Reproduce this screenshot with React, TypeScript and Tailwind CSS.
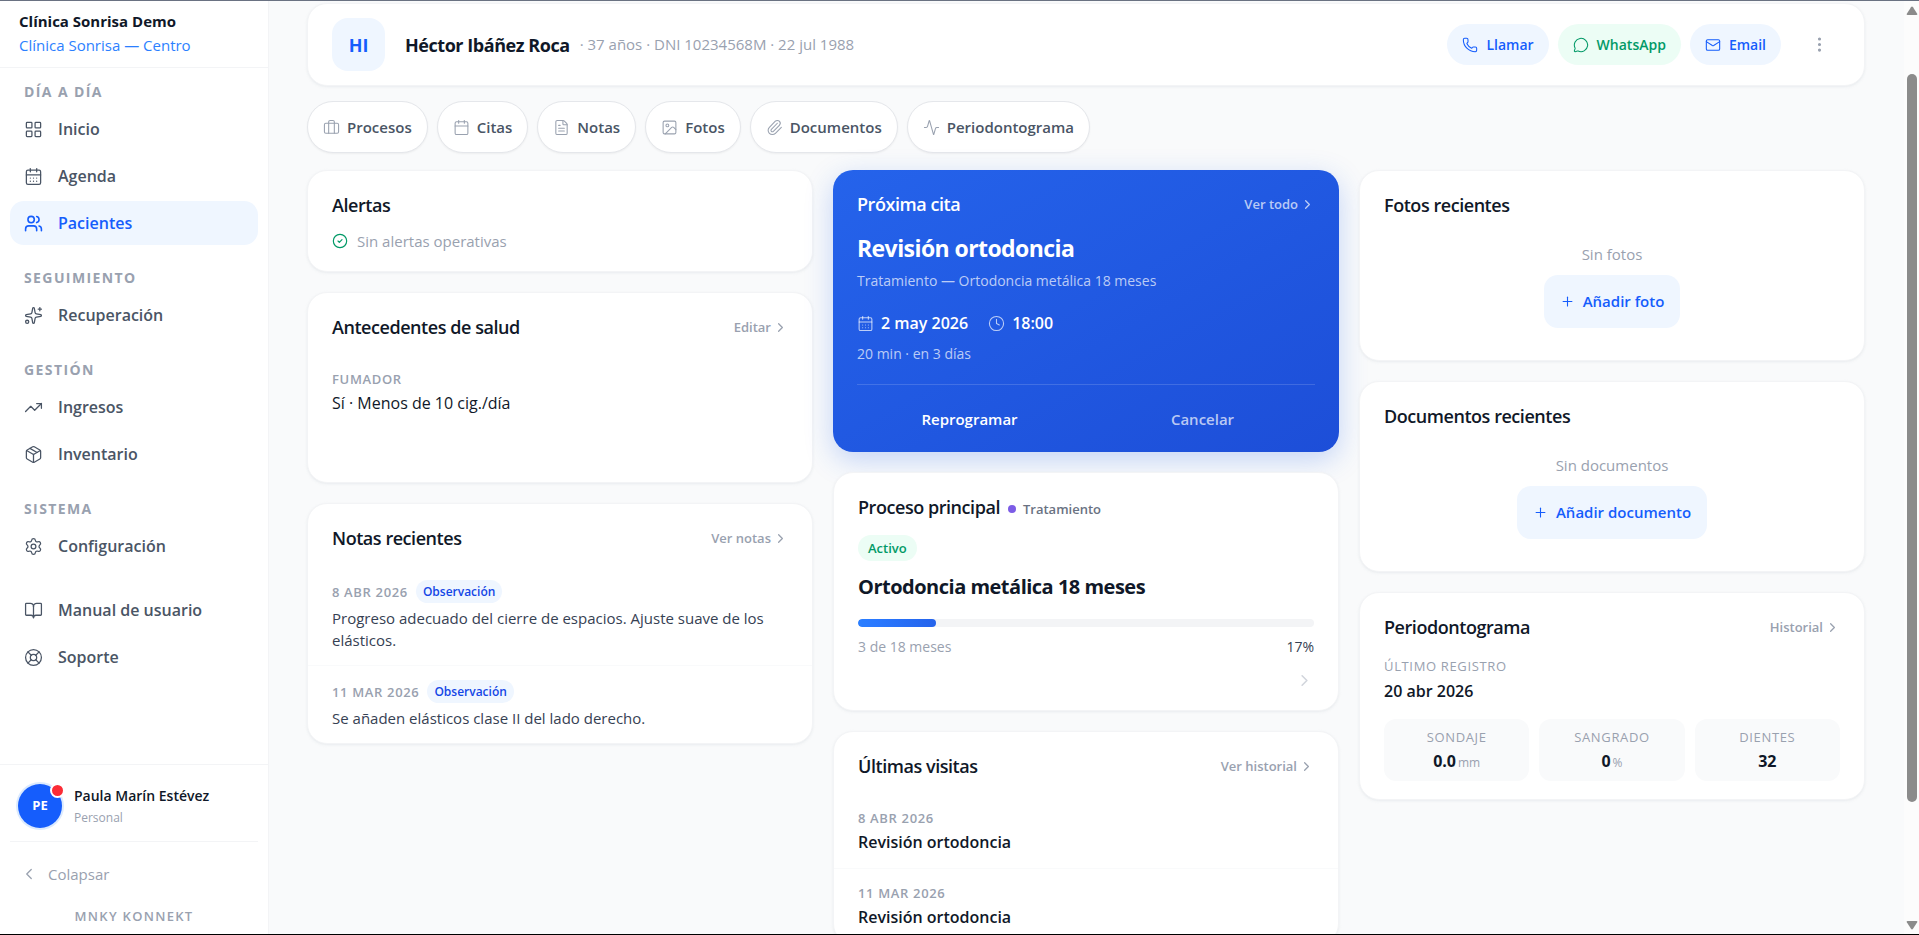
import clsx from 'clsx';
import {
  Activity,
  BookOpen,
  Briefcase,
  Calendar,
  CalendarDays,
  ChevronLeft,
  ChevronRight,
  CircleCheck,
  Clock,
  EllipsisVertical,
  FileText,
  Image,
  LayoutGrid,
  LifeBuoy,
  Mail,
  MessageCircle,
  Package,
  Paperclip,
  Phone,
  Plus,
  Settings,
  Sparkles,
  TrendingUp,
  Users,
  type LucideIcon,
} from 'lucide-react';
import type { ReactNode } from 'react';

interface NavItem {
  label: string;
  icon: LucideIcon;
  active?: boolean;
}

const NAV_GROUPS: { title: string; items: NavItem[] }[] = [
  {
    title: 'Día a día',
    items: [
      { label: 'Inicio', icon: LayoutGrid },
      { label: 'Agenda', icon: CalendarDays },
      { label: 'Pacientes', icon: Users, active: true },
    ],
  },
  { title: 'Seguimiento', items: [{ label: 'Recuperación', icon: Sparkles }] },
  {
    title: 'Gestión',
    items: [
      { label: 'Ingresos', icon: TrendingUp },
      { label: 'Inventario', icon: Package },
    ],
  },
  { title: 'Sistema', items: [{ label: 'Configuración', icon: Settings }] },
];

const HELP_ITEMS: NavItem[] = [
  { label: 'Manual de usuario', icon: BookOpen },
  { label: 'Soporte', icon: LifeBuoy },
];

const SECTIONS: NavItem[] = [
  { label: 'Procesos', icon: Briefcase },
  { label: 'Citas', icon: Calendar },
  { label: 'Notas', icon: FileText },
  { label: 'Fotos', icon: Image },
  { label: 'Documentos', icon: Paperclip },
  { label: 'Periodontograma', icon: Activity },
];

const NOTES = [
  {
    date: '8 abr 2026',
    kind: 'Observación',
    text: 'Progreso adecuado del cierre de espacios. Ajuste suave de los elásticos.',
  },
  {
    date: '11 mar 2026',
    kind: 'Observación',
    text: 'Se añaden elásticos clase II del lado derecho.',
  },
];

const VISITS = [
  { date: '8 abr 2026', title: 'Revisión ortodoncia' },
  { date: '11 mar 2026', title: 'Revisión ortodoncia' },
];

const PERIO_STATS = [
  { label: 'Sondaje', value: '0.0', unit: 'mm' },
  { label: 'Sangrado', value: '0', unit: '%' },
  { label: 'Dientes', value: '32', unit: '' },
];

const PROGRESS = 17;

const NavLink = ({ label, icon: Icon, active }: NavItem) => (
  <a
    href="#"
    className={clsx(
      'flex h-11 items-center gap-[15px] rounded-[14px] px-[14px] text-base font-semibold',
      active ? 'bg-blue-50 text-blue-600' : 'text-gray-600',
    )}
  >
    <Icon size={19} strokeWidth={active ? 2 : 1.6} />
    {label}
  </a>
);

const Sidebar = () => (
  <aside className="flex w-[269px] shrink-0 flex-col border-r border-gray-100 bg-white">
    <div className="border-b border-gray-100 px-[19px] pt-2 pb-[10px] text-[15px] leading-6">
      <p className="font-bold text-gray-900">Clínica Sonrisa Demo</p>
      <p className="text-blue-500">Clínica Sonrisa — Centro</p>
    </div>

    <nav className="flex flex-1 flex-col px-[10px] pt-[14px]">
      <div className="flex flex-col gap-[23px]">
        {NAV_GROUPS.map((group) => (
          <div key={group.title}>
            <h2 className="mb-[5px] px-[14px] text-sm leading-5 font-bold tracking-widest text-gray-400 uppercase">
              {group.title}
            </h2>
            <div className="flex flex-col gap-[3px]">
              {group.items.map((item) => (
                <NavLink key={item.label} {...item} />
              ))}
            </div>
          </div>
        ))}
      </div>
      <div className="mt-5 flex flex-col gap-[3px]">
        {HELP_ITEMS.map((item) => (
          <NavLink key={item.label} {...item} />
        ))}
      </div>
    </nav>

    <div className="border-t border-gray-100 px-[10px]">
      <div className="flex items-center gap-3 border-b border-gray-100 px-2 pt-[19px] pb-[13px]">
        <div className="relative flex size-[44px] items-center justify-center rounded-full bg-blue-600 text-[13px] font-bold text-white ring-2 ring-blue-100">
          PE
          <span className="absolute -top-[1px] -right-[3px] size-[15px] rounded-full border-2 border-white bg-red-500" />
        </div>
        <div>
          <p className="text-sm leading-6 font-semibold text-gray-900">Paula Marín Estévez</p>
          <p className="text-xs leading-5 text-gray-400">Personal</p>
        </div>
      </div>
      <button type="button" className="mt-[10px] flex h-11 items-center gap-[10px] px-[10px] text-[15px] text-gray-400">
        <ChevronLeft size={18} strokeWidth={1.75} />
        Colapsar
      </button>
      <p className="pt-[10px] pb-2 text-center text-[13px] leading-5 font-semibold tracking-widest text-gray-400">
        MNKY KONNEKT
      </p>
    </div>
  </aside>
);

const Card = ({ children, className }: { children: ReactNode; className?: string }) => (
  <section className={clsx('rounded-[20px] border border-gray-100 bg-white shadow-sm shadow-gray-200/60', className)}>
    {children}
  </section>
);

interface CardHeaderProps {
  title: string;
  action?: string;
  light?: boolean;
  children?: ReactNode;
}

const CardHeader = ({ title, action, light, children }: CardHeaderProps) => (
  <header className="flex items-center justify-between px-6 pt-[22px]">
    <div className="flex items-center gap-2">
      <h2 className={clsx('text-lg leading-6 font-semibold tracking-tight', light ? 'text-white' : 'text-gray-900')}>
        {title}
      </h2>
      {children}
    </div>
    {action && (
      <a
        href="#"
        className={clsx(
          'flex items-center gap-[2px] text-[13px] leading-5 font-semibold',
          light ? 'text-white/70' : 'text-gray-400',
        )}
      >
        {action}
        <ChevronRight size={15} />
      </a>
    )}
  </header>
);

const PatientHeader = () => (
  <Card className="flex items-center px-6 py-[14px]">
    <div className="flex size-[53px] items-center justify-center rounded-2xl bg-blue-50 text-lg font-bold text-blue-600">
      HI
    </div>
    <h1 className="ml-5 text-lg font-bold tracking-tight text-gray-900">Héctor Ibáñez Roca</h1>
    <p className="ml-[10px] text-[15px] text-gray-400">· 37 años · DNI 10234568M · 22 jul 1988</p>
    <div className="ml-auto flex items-center gap-[9px] text-sm font-semibold">
      <a href="#" className="flex h-[41px] items-center gap-2 rounded-full bg-blue-50 px-[15px] text-blue-600">
        <Phone size={16} strokeWidth={1.6} />
        Llamar
      </a>
      <a href="#" className="flex h-[41px] items-center gap-2 rounded-full bg-emerald-50 px-[15px] text-emerald-600">
        <MessageCircle size={16} strokeWidth={1.6} />
        WhatsApp
      </a>
      <a href="#" className="flex h-[41px] items-center gap-2 rounded-full bg-blue-50 px-[15px] text-blue-600">
        <Mail size={16} strokeWidth={1.6} />
        Email
      </a>
      <button
        type="button"
        aria-label="Más opciones"
        className="ml-[9px] flex size-[41px] items-center justify-center rounded-full text-gray-400"
      >
        <EllipsisVertical size={19} />
      </button>
    </div>
  </Card>
);

const SectionLinks = () => (
  <nav className="mt-[15px] flex gap-[9px]">
    {SECTIONS.map(({ label, icon: Icon }) => (
      <a
        key={label}
        href="#"
        className="flex h-[52px] items-center gap-[7px] rounded-full border border-gray-200 bg-white px-[15px] text-[15px] font-semibold text-gray-600 shadow-xs"
      >
        <Icon size={17} strokeWidth={1.5} className="text-gray-400" />
        {label}
      </a>
    ))}
  </nav>
);

const AlertsCard = () => (
  <Card>
    <CardHeader title="Alertas" />
    <p className="flex items-center gap-[9px] px-6 pt-3 pb-[18px] text-[15px] leading-6 text-gray-400">
      <CircleCheck size={16} strokeWidth={1.75} className="text-emerald-600" />
      Sin alertas operativas
    </p>
  </Card>
);

const HealthCard = () => (
  <Card className="min-h-[191px]">
    <CardHeader title="Antecedentes de salud" action="Editar" />
    <dl className="px-6 pt-8">
      <dt className="text-[13px] leading-4 font-semibold tracking-wider text-gray-400 uppercase">Fumador</dt>
      <dd className="mt-1 text-base leading-6 text-gray-900">Sí · Menos de 10 cig./día</dd>
    </dl>
  </Card>
);

const NotesCard = () => (
  <Card>
    <CardHeader title="Notas recientes" action="Ver notas" />
    <ul className="mt-4 divide-y divide-gray-50">
      {NOTES.map((note) => (
        <li key={note.date} className="px-6 py-[14px]">
          <div className="flex items-center gap-2">
            <time className="text-[13px] leading-5 font-semibold tracking-wider text-gray-400 uppercase">{note.date}</time>
            <span className="rounded-full bg-blue-50 px-[7px] text-xs leading-[23px] font-semibold text-blue-700">
              {note.kind}
            </span>
          </div>
          <p className="mt-1 text-[15px] leading-[22px] text-gray-700">{note.text}</p>
        </li>
      ))}
    </ul>
  </Card>
);

const NextVisitCard = () => (
  <section className="rounded-[20px] bg-linear-to-br from-[#2563eb] to-[#1d4ed8] shadow-[0_8px_28px_rgba(37,99,235,0.25)]">
    <CardHeader title="Próxima cita" action="Ver todo" light />
    <div className="px-6 pt-[18px]">
      <h3 className="text-[23px] leading-7 font-bold tracking-tight text-white">Revisión ortodoncia</h3>
      <p className="mt-[9px] text-sm leading-5 text-white/70">Tratamiento — Ortodoncia metálica 18 meses</p>
      <div className="mt-5 flex items-center gap-5 text-base leading-6 font-semibold text-white">
        <span className="flex items-center gap-[7px]">
          <CalendarDays size={17} strokeWidth={1.5} className="text-white/70" />2 may 2026
        </span>
        <span className="flex items-center gap-[7px]">
          <Clock size={17} strokeWidth={1.5} className="text-white/70" />
          18:00
        </span>
      </div>
      <p className="mt-[9px] text-sm leading-5 text-white/70">20 min · en 3 días</p>
      <div className="mt-5 grid grid-cols-2 gap-2 border-t border-white/15 pt-2 pb-[7px] text-[15px] font-semibold">
        <button type="button" className="h-[52px] text-white">
          Reprogramar
        </button>
        <button type="button" className="h-[52px] text-white/70">
          Cancelar
        </button>
      </div>
    </div>
  </section>
);

const ProcessCard = () => (
  <Card>
    <CardHeader title="Proceso principal">
      <span className="flex items-center gap-[7px] pt-1 text-[13px] leading-5 font-semibold text-gray-500">
        <span className="size-2 rounded-full bg-[#7c5ce6]" />
        Tratamiento
      </span>
    </CardHeader>
    <div className="px-6 pt-4 pb-5">
      <span className="inline-block rounded-full bg-emerald-50 px-[10px] text-[13px] leading-[26px] font-semibold text-emerald-600">
        Activo
      </span>
      <h3 className="mt-3 text-xl leading-7 font-bold tracking-tight text-gray-900">Ortodoncia metálica 18 meses</h3>
      <div className="mt-[18px] h-2 overflow-hidden rounded-full bg-gray-100">
        <div className="h-full rounded-full bg-linear-to-r from-blue-500 to-[#2563eb]" style={{ width: `${PROGRESS}%` }} />
      </div>
      <div className="mt-[10px] flex justify-between text-sm leading-5">
        <span className="text-gray-400">3 de 18 meses</span>
        <span className="text-gray-700">{PROGRESS}%</span>
      </div>
      <div className="mt-[14px] flex justify-end text-gray-300">
        <ChevronRight size={19} />
      </div>
    </div>
  </Card>
);

const VisitsCard = () => (
  <Card>
    <CardHeader title="Últimas visitas" action="Ver historial" />
    <ul className="mt-4 divide-y divide-gray-50">
      {VISITS.map((visit) => (
        <li key={visit.date} className="px-6 pt-4 pb-[14px]">
          <time className="block text-[13px] leading-4 font-semibold tracking-wider text-gray-400 uppercase">
            {visit.date}
          </time>
          <p className="mt-1 text-base leading-6 font-semibold text-gray-900">{visit.title}</p>
        </li>
      ))}
    </ul>
  </Card>
);

interface EmptyCardProps {
  title: string;
  message: string;
  action: string;
}

const EmptyCard = ({ title, message, action }: EmptyCardProps) => (
  <Card className="min-h-[191px]">
    <CardHeader title={title} />
    <div className="flex flex-col items-center gap-[10px] pt-[26px]">
      <p className="text-[15px] leading-[22px] text-gray-400">{message}</p>
      <button
        type="button"
        className="flex h-[53px] items-center gap-2 rounded-[14px] bg-blue-50 px-4 text-[15px] font-semibold text-blue-600"
      >
        <Plus size={15} strokeWidth={1.75} />
        {action}
      </button>
    </div>
  </Card>
);

const PerioCard = () => (
  <Card>
    <CardHeader title="Periodontograma" action="Historial" />
    <div className="px-6 pt-[19px] pb-[18px]">
      <p className="text-[13px] leading-4 font-medium tracking-wider text-gray-400 uppercase">Último registro</p>
      <p className="mt-[5px] text-base leading-6 font-semibold text-gray-900">20 abr 2026</p>
      <div className="mt-4 grid grid-cols-3 gap-[10px]">
        {PERIO_STATS.map((stat) => (
          <div key={stat.label} className="rounded-xl bg-gray-50 pt-[10px] pb-2 text-center">
            <p className="text-[13px] leading-4 font-medium tracking-wider text-gray-400 uppercase">{stat.label}</p>
            <p className="mt-1 text-base leading-6 font-bold text-gray-900">
              {stat.value}
              {stat.unit && <span className="ml-[2px] text-xs font-normal text-gray-400">{stat.unit}</span>}
            </p>
          </div>
        ))}
      </div>
    </div>
  </Card>
);

const ScrollTrack = () => (
  <div className="flex w-[15px] shrink-0 flex-col items-center bg-[#fcfcfc] pt-[5px] pb-1">
    <svg width="12" height="10" viewBox="0 0 12 10" fill="#8b8b8b">
      <path d="M5 1.2a1.2 1.2 0 0 1 2 0l4.2 6.6c.4.7 0 1.2-.8 1.2H1.6c-.8 0-1.2-.5-.8-1.2z" />
    </svg>
    <div className="mt-[58px] w-[10px] grow-[728] rounded-full bg-[#8b8b8b]" />
    <div className="grow-[118]" />
    <svg width="12" height="10" viewBox="0 0 12 10" fill="#8b8b8b">
      <path d="M5 8.8a1.2 1.2 0 0 0 2 0l4.2-6.6c.4-.7 0-1.2-.8-1.2H1.6c-.8 0-1.2.5-.8 1.2z" />
    </svg>
  </div>
);

const App = () => (
  <div className="flex h-screen overflow-hidden border-t border-b border-t-gray-500 border-b-black bg-gray-50 font-['Open_Sans','Noto_Sans',sans-serif]">
    <Sidebar />
    <main className="min-w-0 flex-1 overflow-hidden pt-[2px] pr-[39px] pl-[38px]">
      <PatientHeader />
      <SectionLinks />
      <div className="mt-[17px] grid grid-cols-3 items-start gap-5">
        <div className="flex flex-col gap-5">
          <AlertsCard />
          <HealthCard />
          <NotesCard />
        </div>
        <div className="flex flex-col gap-5">
          <NextVisitCard />
          <ProcessCard />
          <VisitsCard />
        </div>
        <div className="flex flex-col gap-5">
          <EmptyCard title="Fotos recientes" message="Sin fotos" action="Añadir foto" />
          <EmptyCard title="Documentos recientes" message="Sin documentos" action="Añadir documento" />
          <PerioCard />
        </div>
      </div>
    </main>
    <ScrollTrack />
  </div>
);

export default App;
